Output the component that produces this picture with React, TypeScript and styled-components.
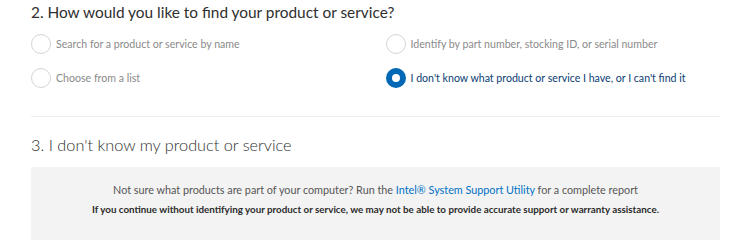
import React from "react";
import styled, { createGlobalStyle } from "styled-components";

const GlobalStyle = createGlobalStyle`
  body {
    margin: 0;
    background: #fff;
    font-family: Lato, "Open Sans", sans-serif;
  }
`;

const Page = styled.div`
  width: 689px;
  margin-left: 31px;
`;

const StepTitle = styled.h2<{ $light?: boolean }>`
  margin: 0;
  font-family: Lato, sans-serif;
  font-size: ${(p) => (p.$light ? "16.3px" : "15.4px")};
  line-height: 24px;
  font-weight: ${(p) => (p.$light ? 300 : 400)};
  color: #2f2f2f;
`;

const OptionGrid = styled.div`
  display: grid;
  grid-template-columns: 1fr 1fr;
  column-gap: 20px;
  row-gap: 14px;
  margin-top: 10px;
`;

const Option = styled.label<{ $selected?: boolean }>`
  display: flex;
  align-items: center;
  gap: 5px;
  height: 20px;
  font-family: Lato, sans-serif;
  font-size: 10.6px;
  color: ${(p) => (p.$selected ? "#0b3d73" : "#8a8a8a")};
  cursor: pointer;
`;

const Radio = styled.span<{ $selected?: boolean }>`
  box-sizing: border-box;
  width: 20px;
  height: 20px;
  border-radius: 50%;
  flex: none;
  border: ${(p) => (p.$selected ? "6px solid #0068b5" : "1px solid #d4d4d4")};
  background: #fff;
`;

const Divider = styled.hr`
  border: 0;
  border-top: 1px solid #eeeeee;
  margin: 28px 0 0;
`;

const Section = styled.div`
  margin-top: 16px;
`;

const InfoPanel = styled.div`
  margin-top: 10px;
  background: #f3f3f3;
  height: 73px;
  box-sizing: border-box;
  padding-top: 15px;
  text-align: center;
`;

const InfoLine = styled.p`
  margin: 0;
  font-family: Lato, sans-serif;
  font-size: 10.8px;
  line-height: 16px;
  color: #555;
`;

const Warning = styled.p`
  margin: 4px 0 0;
  font-family: Lato, sans-serif;
  font-size: 9.8px;
  line-height: 14px;
  font-weight: 700;
  color: #2b2b2b;
`;

const Link = styled.a`
  color: #0071c5;
  text-decoration: none;
`;

const options = [
  { label: "Search for a product or service by name", selected: false },
  { label: "Identify by part number, stocking ID, or serial number", selected: false },
  { label: "Choose from a list", selected: false },
  { label: "I don't know what product or service I have, or I can't find it", selected: true },
];

export default function App() {
  return (
    <Page>
      <GlobalStyle />
      <StepTitle>2. How would you like to find your product or service?</StepTitle>
      <OptionGrid>
        {options.map((o) => (
          <Option key={o.label} $selected={o.selected}>
            <Radio $selected={o.selected} />
            {o.label}
          </Option>
        ))}
      </OptionGrid>
      <Divider />
      <Section>
        <StepTitle $light>3. I don't know my product or service</StepTitle>
        <InfoPanel>
          <InfoLine>
            Not sure what products are part of your computer? Run the{" "}
            <Link href="#">Intel® System Support Utility</Link> for a complete report
          </InfoLine>
          <Warning>
            If you continue without identifying your product or service, we may not be able to provide accurate support or warranty assistance.
          </Warning>
        </InfoPanel>
      </Section>
    </Page>
  );
}
